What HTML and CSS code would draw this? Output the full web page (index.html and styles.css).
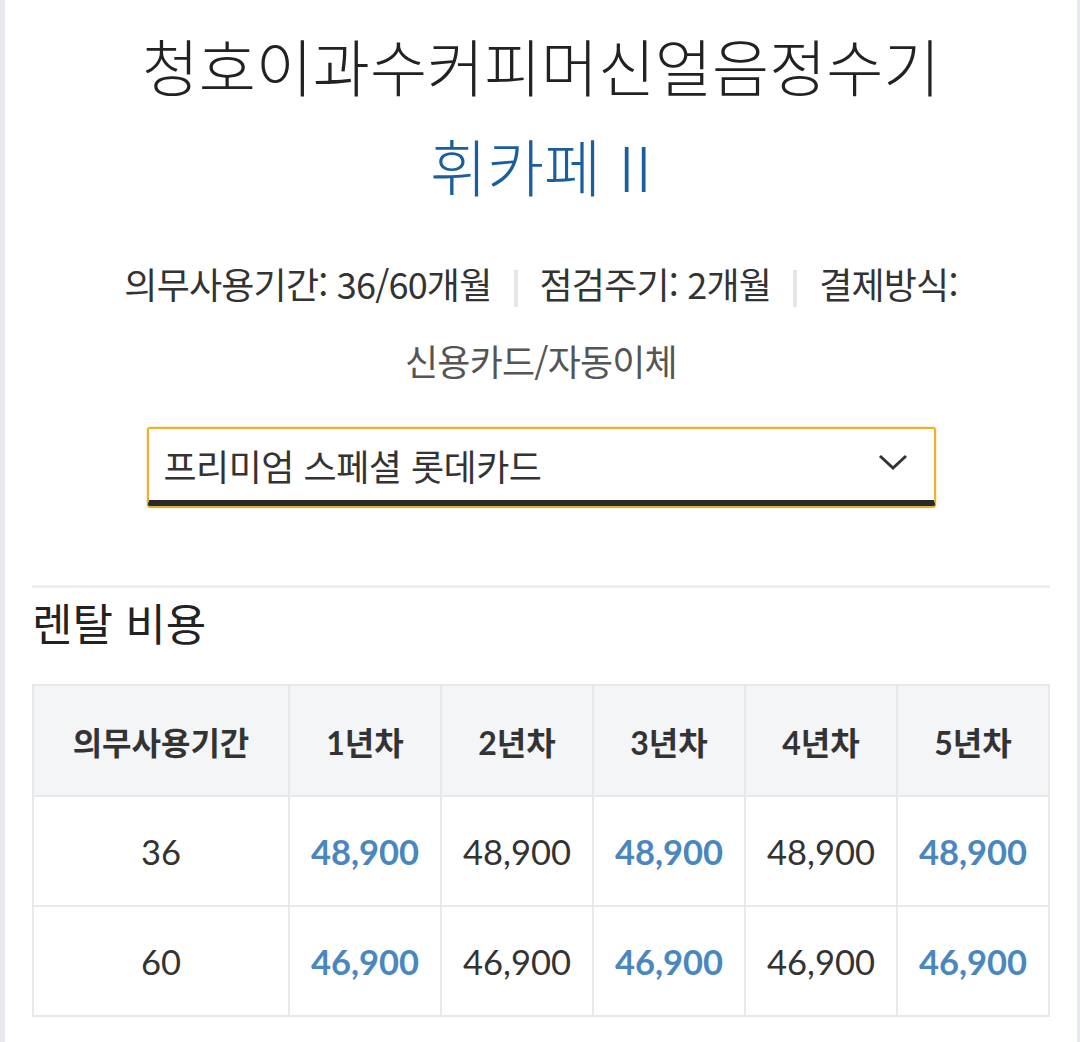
FILE: index.html
```html
<!DOCTYPE html>
<html lang="ko">
<head>
  <meta charset="UTF-8">
  <title>휘카페 II 렌탈</title>
  <link rel="stylesheet" href="styles.css">
</head>
<body>
  <div class="page">
    <h1 class="title">
      <span class="title-main">청호이과수커피머신얼음정수기</span>
      <span class="title-sub">휘카페 II</span>
    </h1>
    <div class="info">
      <p>
        의무사용기간: 36/60개월<span class="sep"></span>점검주기: 2개월<span class="sep"></span>결제방식:
      </p>
      <p class="info-sub">신용카드/자동이체</p>
    </div>
    <div class="select">
      <span>프리미엄 스페셜 롯데카드</span>
      <svg class="chevron" width="30" height="18" viewBox="0 0 30 18">
        <path d="M2 3 L15 15 L28 3" fill="none" stroke="#333" stroke-width="3"/>
      </svg>
    </div>
    <hr class="divider">
    <h2>렌탈 비용</h2>
    <table class="price">
      <thead>
        <tr>
          <th class="col-period">의무사용기간</th>
          <th>1년차</th>
          <th>2년차</th>
          <th>3년차</th>
          <th>4년차</th>
          <th>5년차</th>
        </tr>
      </thead>
      <tbody>
        <tr>
          <td>36</td>
          <td class="hl">48,900</td>
          <td>48,900</td>
          <td class="hl">48,900</td>
          <td>48,900</td>
          <td class="hl">48,900</td>
        </tr>
        <tr>
          <td>60</td>
          <td class="hl">46,900</td>
          <td>46,900</td>
          <td class="hl">46,900</td>
          <td>46,900</td>
          <td class="hl">46,900</td>
        </tr>
      </tbody>
    </table>
  </div>
</body>
</html>
```

FILE: styles.css
```css
body {
  margin: 0;
  background: #e8e9ec;
  font-family: 'Noto Sans CJK KR', 'Noto Sans', sans-serif;
  color: #333;
}
.page {
  background: #fff;
  margin: 0 3px 0 5px;
  padding: 15px 27px 24px;
  min-height: 1003px;
}
.title {
  margin: 0;
  text-align: center;
  font-size: 62px;
  font-weight: 300;
  line-height: 100px;
}
.title span {
  display: block;
}
.title-main {
  color: #222;
}
.title-sub {
  color: #1b5e9e;
}
.info {
  margin-top: 30px;
  text-align: center;
  font-size: 36px;
  line-height: 77px;
  letter-spacing: -0.8px;
}
.info p {
  margin: 0;
}
.info-sub {
  color: #555;
}
.sep {
  display: inline-block;
  width: 4px;
  height: 37px;
  background: #e6e6e6;
  margin: 0 22px;
  vertical-align: -8px;
}
.select {
  width: 789px;
  height: 79px;
  box-sizing: border-box;
  margin: 28px auto 0;
  border: 2px solid #e8b230;
  border-bottom: 6px solid #2a2a2a;
  box-shadow: 0 0 3px rgba(232,178,48,0.6), 0 2px 0 #e8b230;
  border-radius: 3px;
  display: flex;
  align-items: center;
  justify-content: space-between;
  padding: 0 26px 0 15px;
  font-size: 36px;
  letter-spacing: -0.5px;
  color: #333;
}
.chevron {
  margin-top: -6px;
}
.divider {
  border: 0;
  height: 3px;
  background: #eeeeef;
  margin: 79px 0 0;
}
h2 {
  margin: 4px 0 0;
  font-size: 44px;
  font-weight: 400;
  color: #222;
  line-height: 60px;
}
.price {
  width: 100%;
  margin-top: 32px;
  border-collapse: collapse;
  table-layout: fixed;
  font-family: 'Lato', 'Noto Sans CJK KR', sans-serif;
  text-align: center;
}
.price th,
.price td {
  border: 2px solid #e8e8ea;
  padding: 0;
}
.price th {
  background: #f4f5f7;
  height: 109px;
  font-size: 32px;
  font-weight: 700;
  color: #333;
}
.price .col-period {
  width: 25%;
}
.price td {
  height: 108px;
  font-size: 34.5px;
  color: #333;
}
.price td.hl {
  color: #4a87c0;
  font-weight: 700;
}
```
